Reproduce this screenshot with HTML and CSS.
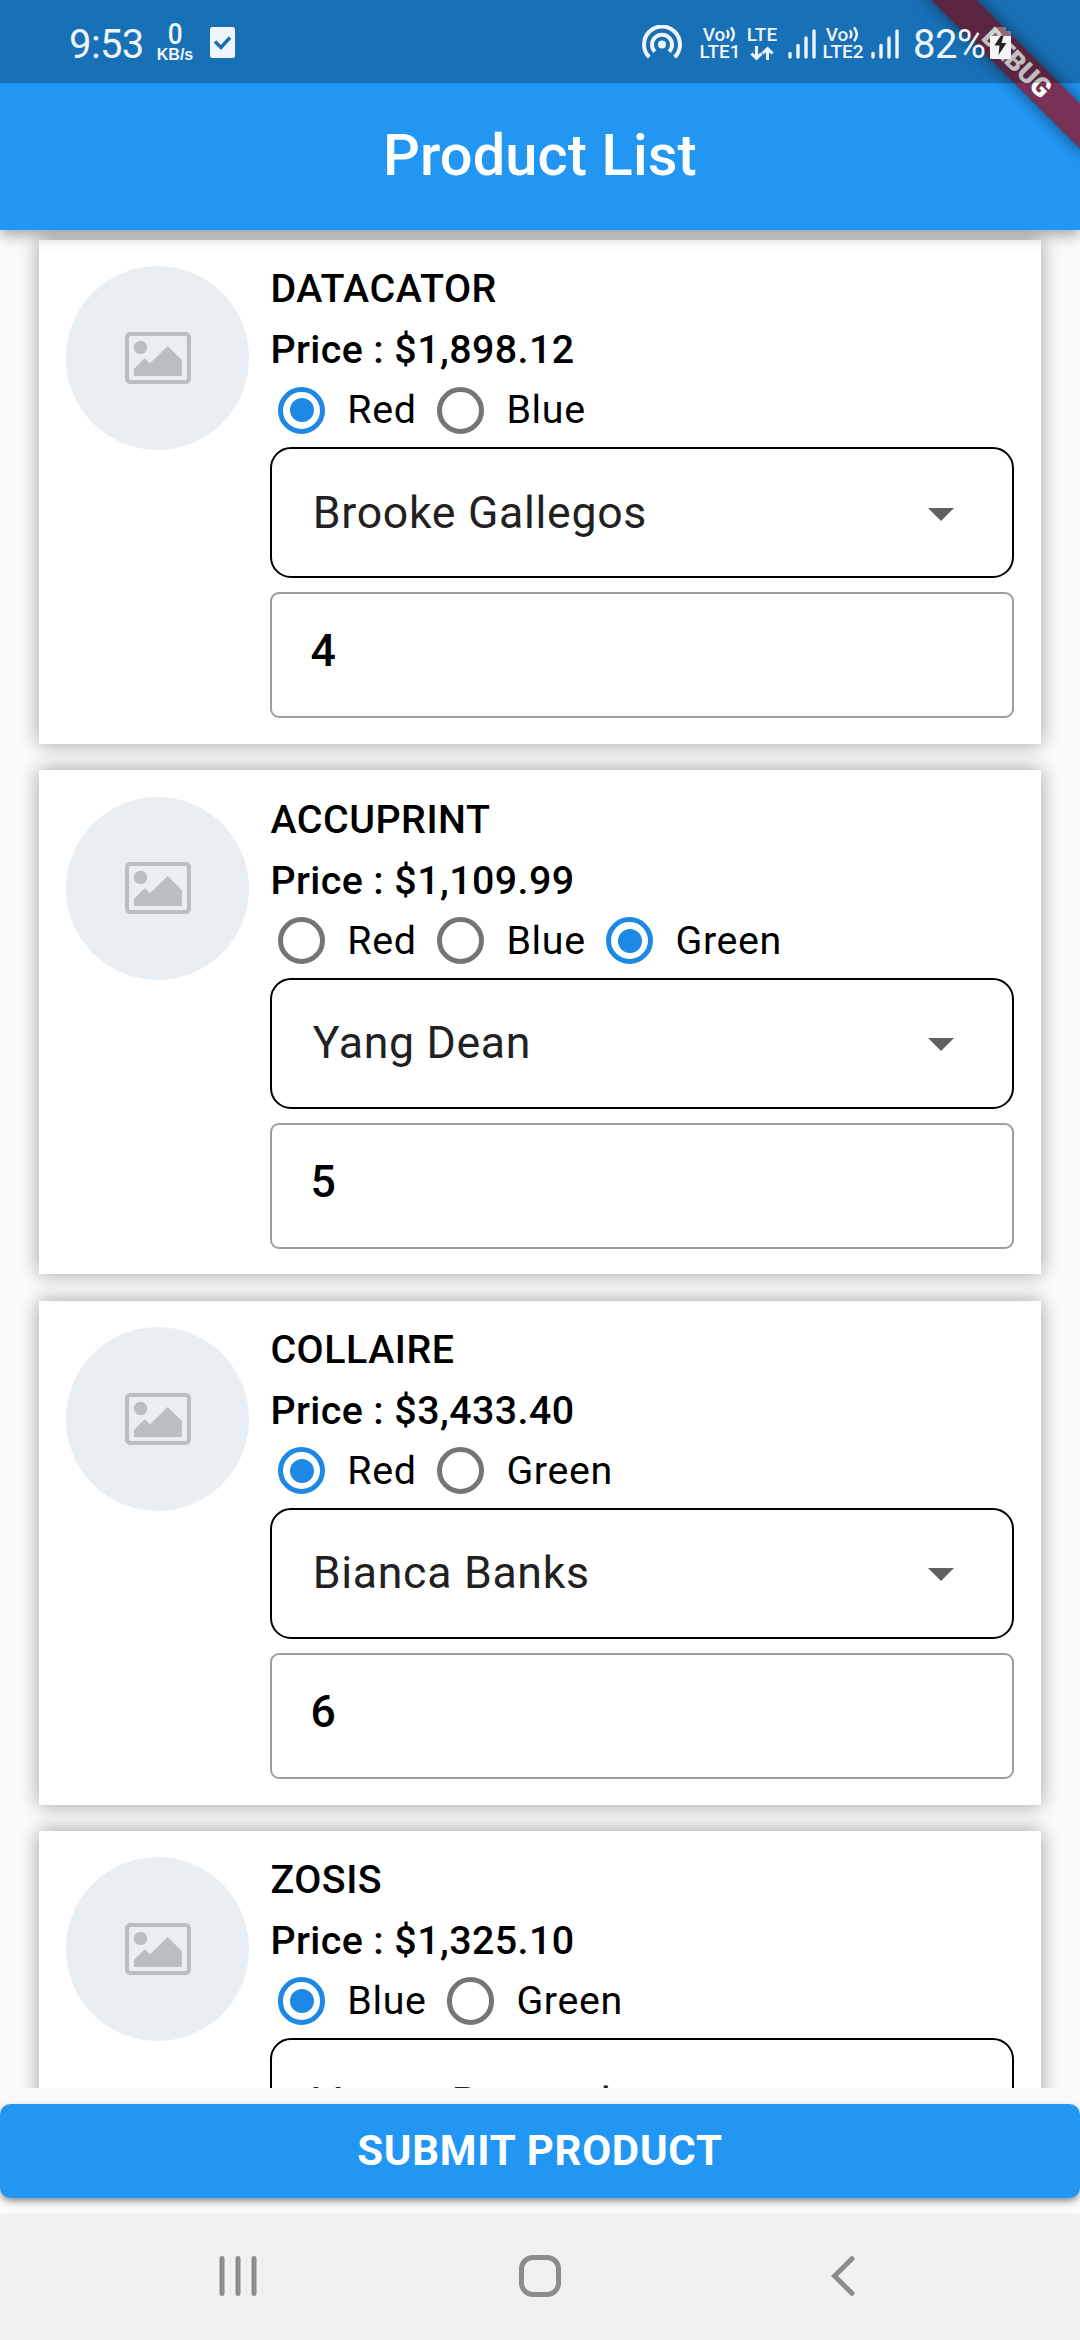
FILE: index.html
```html
<!DOCTYPE html>
<html lang="en">
<head>
<meta charset="utf-8">
<title>Product List</title>
<link rel="stylesheet" href="styles.css">
</head>
<body>
<svg width="0" height="0" class="defs" aria-hidden="true">
  <symbol id="photo" viewBox="0 0 66 52">
    <rect x="2" y="2" width="62" height="48" rx="3.5" fill="none" stroke="#b9bec1" stroke-width="4.2"/>
    <circle cx="15.5" cy="15.4" r="6.7" fill="#b9bec1"/>
    <path d="M9 44v-7l10.600-10.700 5.500 5L42.700 14l14.200 14v16z" fill="#b9bec1"/>
  </symbol>
  <symbol id="bars" viewBox="0 0 28 30">
    <path d="M2 24.500v3.500M10 16.500v11.500M18 9v19M26 2v26" stroke="#f0f4fc" stroke-width="3.400" stroke-linecap="round" fill="none"/>
  </symbol>
  <symbol id="waves" viewBox="0 0 12 18">
    <path d="M1.500 4.500q3.500 4 0 8.500M6 1.500q6 7 0 14.500" stroke="#f0f4fc" stroke-width="2.600" fill="none"/>
  </symbol>
</svg>
<div class="screen">
  <header class="appbar">
    <h1 class="title">Product List</h1>
    <div class="debug"><span>DEBUG</span></div>
    <div class="status">
      <div class="status-left">
        <span class="clock">9:53</span>
        <span class="speed"><b>0</b><i>KB/s</i></span>
        <svg class="task" width="25" height="31" viewBox="0 0 25 31"><rect width="25" height="31" rx="2.500" fill="#f0f4fc"/><path d="M5 14.500l6 6L20 10.500" fill="none" stroke="#1a6fb5" stroke-width="3.400"/></svg>
      </div>
      <svg class="hotspot" width="40" height="34" viewBox="0 0 40 34"><g fill="none" stroke="#f0f4fc" stroke-width="4"><path d="M7.300 32.200A18 18 0 1 1 32.700 32.200"/><path d="M12.800 26.700A10 10 0 1 1 27.200 26.700"/></g><circle cx="20" cy="19.500" r="4" fill="#f0f4fc"/></svg>
      <div class="net volte1"><span>Vo<svg width="12" height="17"><use href="#waves"/></svg></span><span>LTE1</span></div>
      <div class="net lte"><span>LTE</span><svg width="24" height="15" viewBox="0 0 24 15"><path d="M6.500 0v12M1.500 7.500l5 5 5-5M17.500 14V2.500M12.500 7.500l5-5 5 5" fill="none" stroke="#f0f4fc" stroke-width="3"/></svg></div>
      <svg class="signal1" width="28" height="30"><use href="#bars"/></svg>
      <div class="net volte2"><span>Vo<svg width="12" height="17"><use href="#waves"/></svg></span><span>LTE2</span></div>
      <svg class="signal2" width="28" height="30"><use href="#bars"/></svg>
      <span class="percent">82%</span>
      <svg class="battery" width="21" height="32" viewBox="0 0 21 32"><path d="M4 0h12v4h5v6H0V4h4z" fill="#fff" fill-opacity=".32"/><path d="M0 9h21v21.500q0 1.500-1.500 1.500h-18Q0 32 0 30.500z" fill="#f5f5f7"/><path d="M10.500 9L4.500 18.500h5L8.500 28l8-12h-5l2-7z" fill="#222"/></svg>
    </div>
  </header>

  <main class="list">
    <section class="card">
      <div class="avatar"><svg width="66" height="52"><use href="#photo"/></svg></div>
      <div class="info">
        <h2 class="name">DATACATOR</h2>
        <p class="price">Price : $1,898.12</p>
        <div class="options">
          <label class="option"><span class="radio on"></span>Red</label>
          <label class="option"><span class="radio"></span>Blue</label>
        </div>
        <div class="select"><span>Brooke Gallegos</span><svg width="26" height="13"><path d="M0 0h26L13 13z" fill="#616161"/></svg></div>
        <div class="field">4</div>
      </div>
    </section>
    <section class="card">
      <div class="avatar"><svg width="66" height="52"><use href="#photo"/></svg></div>
      <div class="info">
        <h2 class="name">ACCUPRINT</h2>
        <p class="price">Price : $1,109.99</p>
        <div class="options">
          <label class="option"><span class="radio"></span>Red</label>
          <label class="option"><span class="radio"></span>Blue</label>
          <label class="option"><span class="radio on"></span>Green</label>
        </div>
        <div class="select"><span>Yang Dean</span><svg width="26" height="13"><path d="M0 0h26L13 13z" fill="#616161"/></svg></div>
        <div class="field">5</div>
      </div>
    </section>
    <section class="card">
      <div class="avatar"><svg width="66" height="52"><use href="#photo"/></svg></div>
      <div class="info">
        <h2 class="name">COLLAIRE</h2>
        <p class="price">Price : $3,433.40</p>
        <div class="options">
          <label class="option"><span class="radio on"></span>Red</label>
          <label class="option"><span class="radio"></span>Green</label>
        </div>
        <div class="select"><span>Bianca Banks</span><svg width="26" height="13"><path d="M0 0h26L13 13z" fill="#616161"/></svg></div>
        <div class="field">6</div>
      </div>
    </section>
    <section class="card">
      <div class="avatar"><svg width="66" height="52"><use href="#photo"/></svg></div>
      <div class="info">
        <h2 class="name">ZOSIS</h2>
        <p class="price">Price : $1,325.10</p>
        <div class="options">
          <label class="option"><span class="radio on"></span>Blue</label>
          <label class="option"><span class="radio"></span>Green</label>
        </div>
        <div class="select"><span>Vance Bernard</span><svg width="26" height="13"><path d="M0 0h26L13 13z" fill="#616161"/></svg></div>
      </div>
    </section>
  </main>

  <div class="actions"><button class="submit">SUBMIT PRODUCT</button></div>

  <nav class="navbar">
    <svg width="38" height="42" viewBox="0 0 38 42"><path d="M3 3.500v35M19 3.500v35M35 3.500v35" stroke="#8c8c8c" stroke-width="5" stroke-linecap="round"/></svg>
    <svg class="home" width="42" height="42" viewBox="0 0 42 42"><rect x="2.500" y="2.500" width="37" height="37" rx="11.500" fill="none" stroke="#8c8c8c" stroke-width="5"/></svg>
    <svg class="back" width="24" height="42" viewBox="0 0 24 42"><path d="M21 3.700L3.500 21 21 38.300" fill="none" stroke="#8c8c8c" stroke-width="5" stroke-linecap="round"/></svg>
  </nav>
</div>
</body>
</html>
```

FILE: styles.css
```css
* { box-sizing: border-box; }
body {
  margin: 0;
  font-family: Roboto, "Liberation Sans", sans-serif;
  color: #000;
}
svg { display: block; flex: none; }
.defs { position: absolute; }
.screen {
  width: 1080px;
  height: 2340px;
  display: flex;
  flex-direction: column;
  background: #fafafa;
  overflow: hidden;
}

/* App bar with the translucent system status bar over it */
.appbar {
  position: relative;
  z-index: 1;
  flex: none;
  height: 230px;
  padding: 83px 0 4px;
  background: #2196f3;
  box-shadow: 0 5px 10px -2px rgba(0, 0, 0, .2), 0 10px 13px rgba(0, 0, 0, .1), 0 3px 18px rgba(0, 0, 0, .08);
  display: flex;
  align-items: center;
  justify-content: center;
}
.title {
  margin: 0;
  font-size: 57.750px;
  font-weight: 500;
  line-height: 68px;
  letter-spacing: .1px;
  color: #fff;
}
.debug {
  position: absolute;
  inset: 0;
  clip-path: inset(0 0 -40px 0);
}
.debug span {
  position: absolute;
  left: 907px;
  top: 47px;
  width: 220px;
  height: 31.500px;
  transform: rotate(45deg);
  background: rgba(160, 7, 20, .7);
  box-shadow: 0 0 16px rgba(0, 0, 0, .5);
  color: #fff;
  font-size: 26.800px;
  font-weight: 900;
  line-height: 32px;
  text-align: center;
}
.status {
  position: absolute;
  inset: 0 0 auto 0;
  height: 83px;
  padding: 0 69px;
  background: rgba(0, 0, 0, .25);
  color: #f0f4fc;
  display: flex;
  align-items: flex-start;
}
.status-left { display: flex; width: 573px; }
.clock, .percent { font-size: 40px; line-height: 47px; margin-top: 20.500px; letter-spacing: -.6px; }
.clock { width: 87px; }
.speed { display: flex; flex-direction: column; align-items: center; width: 38px; margin-top: 22px; }
.speed b { font-size: 29px; line-height: 25px; font-weight: 500; transform: scaleX(.9); }
.speed i { font: 700 16px/16px "Liberation Sans", sans-serif; }
.task { margin: 27px 0 0 16px; }
.hotspot { margin-top: 25px; }
.net { display: flex; flex-direction: column; align-items: center; font-size: 19px; font-weight: 500; line-height: 17px; margin-top: 26px; }
.net span { display: flex; height: 17px; }
.volte1 { width: 40px; margin-left: 18px; }
.lte { width: 32px; margin-left: 6px; }
.lte svg { margin-top: 3px; }
.signal1 { margin: 29px 0 0 10px; }
.volte2 { width: 42px; margin-left: 6px; }
.signal2 { margin: 29px 0 0 7px; }
.percent { margin-left: 14px; width: 77px; }
.battery { margin-top: 26.500px; }

/* Product cards */
.list {
  flex: none;
  height: 1858px;
  padding: 10px 39.375px 0;
  overflow: hidden;
}
.card {
  height: 504px;
  margin-bottom: 26.250px;
  padding: 26.250px;
  display: flex;
  gap: 21px;
  background: #fff;
  box-shadow: 0 0 18px #9e9e9e;
}
.avatar {
  flex: none;
  width: 183.750px;
  height: 183.750px;
  border-radius: 50%;
  background: #e8eef1;
  display: flex;
  align-items: center;
  justify-content: center;
}
.info { flex: 1; }
.name, .price {
  margin: 0;
  font-size: 39.375px;
  line-height: 46px;
  font-weight: 500;
  letter-spacing: .53px;
}
.price { margin-top: 15px; letter-spacing: .42px; }
.options {
  display: flex;
  gap: 20.500px;
  height: 74px;
  align-items: center;
  padding-left: 7.700px;
  font-size: 39.375px;
  line-height: 46px;
  letter-spacing: .66px;
}
.option { display: flex; align-items: center; }
.radio {
  width: 47.250px;
  height: 47.250px;
  margin-right: 22px;
  border-radius: 50%;
  border: 5.250px solid #757575;
  display: flex;
}
.radio.on { border-color: #1e88e5; }
.radio.on::after {
  content: "";
  width: 24px;
  height: 24px;
  margin: auto;
  border-radius: 50%;
  background: #1e88e5;
}
.select {
  height: 131px;
  border: 2.600px solid #000;
  border-radius: 21px;
  padding: 0 58px 0 40.400px;
  display: flex;
  align-items: center;
  justify-content: space-between;
  font-size: 44.625px;
  line-height: 52px;
  letter-spacing: .7px;
  color: #212121;
}
.select svg { margin-top: 3px; }
.field {
  height: 126px;
  margin-top: 14px;
  border: 2.600px solid #9e9e9e;
  border-radius: 9px;
  padding: 31px 38px;
  font-size: 44.625px;
  line-height: 52px;
  font-weight: 500;
}

/* Bottom action and system navigation */
.actions { flex: none; height: 126px; padding: 15.750px 0; }
.submit {
  display: block;
  width: 100%;
  height: 94.500px;
  border: 0;
  border-radius: 10.500px;
  background: #2196f3;
  box-shadow: 0 4px 6px -1px rgba(0, 0, 0, .35), 0 3px 10px rgba(0, 0, 0, .12);
  color: #fff;
  font: 700 42px/50px Roboto, "Liberation Sans", sans-serif;
  letter-spacing: .75px;
}
.navbar {
  flex: none;
  height: 126px;
  padding: 0 0 2px 219px;
  background: #f1f1f1;
  display: flex;
  align-items: center;
}
.home { margin-left: 262px; }
.back { margin-left: 270px; }
```
